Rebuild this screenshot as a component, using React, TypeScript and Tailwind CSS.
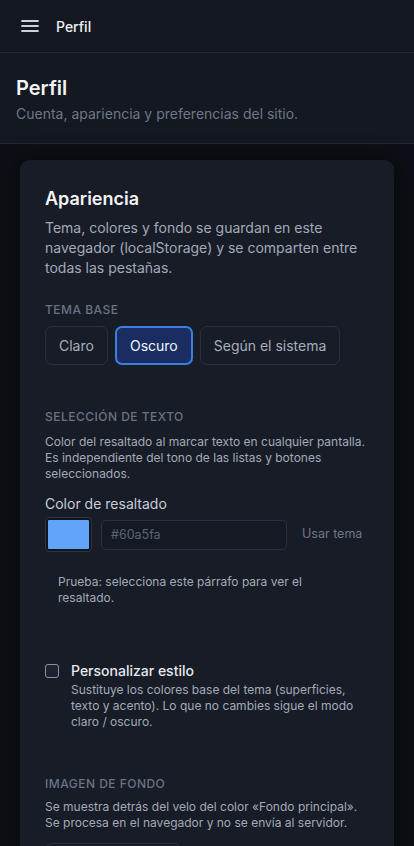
import { useState } from "react";

type ThemeMode = "light" | "dark" | "system";

const THEME_OPTIONS: { id: ThemeMode; label: string }[] = [
  { id: "light", label: "Claro" },
  { id: "dark", label: "Oscuro" },
  { id: "system", label: "Según el sistema" },
];

function MenuIcon() {
  return (
    <svg width="18" height="18" viewBox="0 0 18 18" fill="none" aria-hidden="true">
      <path d="M1 4h16M1 9h16M1 14h16" stroke="#cbd2dc" strokeWidth="1.8" strokeLinecap="round" />
    </svg>
  );
}

function SectionLabel({ children }: { children: string }) {
  return (
    <div className="text-[12px] leading-4 font-medium uppercase tracking-[0.04em] text-[#6b7383]">
      {children}
    </div>
  );
}

export default function App() {
  const [theme, setTheme] = useState<ThemeMode>("dark");
  const [custom, setCustom] = useState(false);

  return (
    <div
      className="min-h-screen bg-[#0c0f15] text-[#e6e9ef]"
      style={{ fontFamily: "Inter, 'Noto Sans', sans-serif" }}
    >
      {/* top bar */}
      <header className="flex h-[53px] items-center gap-[17px] border-b border-[#252a35] bg-[#141821] px-[21px]">
        <MenuIcon />
        <span className="text-[14px] font-medium text-[#eef0f4]">Perfil</span>
      </header>

      {/* page heading */}
      <div className="border-b border-[#252a35] bg-[#141821] px-4 pt-[21px] pb-[19px]">
        <h1 className="text-[20px] leading-7 font-semibold text-[#f3f4f6]">Perfil</h1>
        <p className="mt-[2px] text-[14px] leading-5 text-[#6f7787]">
          Cuenta, apariencia y preferencias del sitio.
        </p>
      </div>

      <main className="px-5 pt-4">
        <section className="rounded-[9px] bg-[#171c27] px-[25px] pt-[25px] pb-8 shadow-[0_0_24px_rgba(0,0,0,0.45)]">
          <h2 className="text-[18px] leading-7 font-semibold text-[#f3f4f6]">Apariencia</h2>
          <p className="mt-[5px] text-[14px] leading-5 text-[#a3aab7]">
            Tema, colores y fondo se guardan en este navegador (localStorage) y se comparten entre
            todas las pestañas.
          </p>

          <div className="mt-[24px]">
            <SectionLabel>Tema base</SectionLabel>
            <div className="mt-2 flex gap-[7px]">
              {THEME_OPTIONS.map((opt) => {
                const active = opt.id === theme;
                return (
                  <button
                    key={opt.id}
                    type="button"
                    onClick={() => setTheme(opt.id)}
                    className={
                      active
                        ? "h-[39px] rounded-[7px] border-2 border-[#3d7fe0] bg-[#1a2d63] px-[13px] text-[14px] text-[#f3f5fa]"
                        : "h-[39px] rounded-[7px] border border-[#2a303d] bg-transparent px-[13px] text-[14px] text-[#a7aebb]"
                    }
                  >
                    {opt.label}
                  </button>
                );
              })}
            </div>
          </div>

          <div className="mt-11">
            <SectionLabel>Selección de texto</SectionLabel>
            <p className="mt-[9px] text-[12px] leading-4 text-[#a3aab7]">
              Color del resaltado al marcar texto en cualquier pantalla. Es independiente del tono
              de las listas y botones seleccionados.
            </p>

            <div className="mt-[11px] text-[14px] leading-[22px] text-[#c6ccd6]">
              Color de resaltado
            </div>
            <div className="mt-[2px] flex items-center gap-[9px]">
              <div className="flex h-[35px] w-[47px] items-center justify-center rounded-[4px] border border-[#2e3441] bg-[#10141c] p-[2px]">
                <div className="h-full w-full rounded-[1px] bg-[#60a5fa]" />
              </div>
              <input
                className="h-[30px] w-[186px] rounded-[5px] border border-[#2a303d] bg-[#141924] px-[9px] text-[12.5px] text-[#c6ccd6] outline-none placeholder:text-[#5d6574]"
                placeholder="#60a5fa"
              />
              <button type="button" className="ml-[6px] text-[12.5px] text-[#6f7787]">
                Usar tema
              </button>
            </div>

            <p className="mt-[10px] rounded-[6px] px-[13px] py-3 text-[12px] leading-4 text-[#a3aab7]">
              Prueba: selecciona este párrafo para ver el resaltado.
            </p>
          </div>

          <label className="mt-[42px] flex cursor-pointer items-start gap-3">
            <input
              type="checkbox"
              checked={custom}
              onChange={(e) => setCustom(e.target.checked)}
              className="mt-[4px] h-[14px] w-[14px] shrink-0 appearance-none rounded-[3px] border border-[#8a919e] bg-[#1c2230] checked:bg-[#3d7fe0]"
            />
            <span className="flex flex-col">
              <span className="text-[14px] leading-[22px] font-medium text-[#e6e9ef]">
                Personalizar estilo
              </span>
              <span className="text-[12px] leading-4 text-[#a3aab7]">
                Sustituye los colores base del tema (superficies, texto y acento). Lo que no cambies
                sigue el modo claro / oscuro.
              </span>
            </span>
          </label>

          <div className="mt-[46px]">
            <SectionLabel>Imagen de fondo</SectionLabel>
            <p className="mt-[7px] text-[12px] leading-4 text-[#a3aab7]">
              Se muestra detrás del velo del color «Fondo principal». Se procesa en el navegador y
              no se envía al servidor.
            </p>
            <button
              type="button"
              className="mt-3 h-[36px] rounded-[7px] border border-[#2a303d] px-4 text-[14px] text-[#c6ccd6]"
            >
              Elegir imagen…
            </button>
          </div>
        </section>
      </main>
    </div>
  );
}
